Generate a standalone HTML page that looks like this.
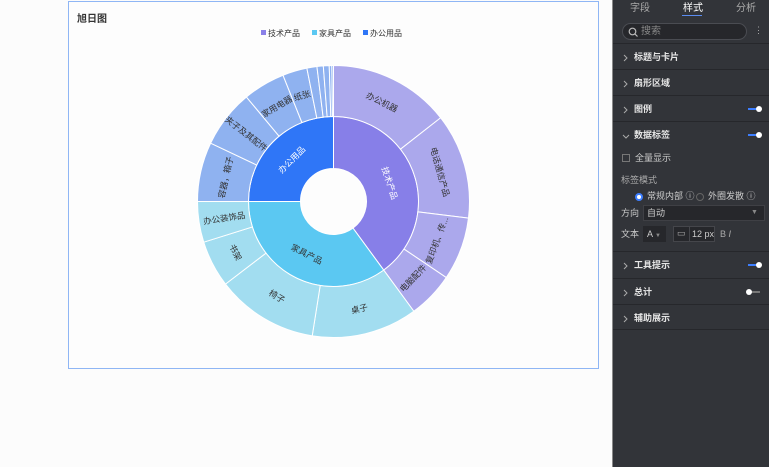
<!DOCTYPE html>
<html><head><meta charset="utf-8"><style>
*{margin:0;padding:0;box-sizing:border-box}
body{width:769px;height:467px;overflow:hidden;background:#fcfcfc;font-family:"Liberation Sans","Noto Sans CJK SC",sans-serif;position:relative}
.card{position:absolute;left:68px;top:1px;width:531px;height:368px;border:1px solid #8fb6f5;background:#fdfdfd}
.title{position:absolute;left:8px;top:8px;font-size:10px;font-weight:bold;color:#333}
.legend{position:absolute;top:26px;left:192px;font-size:8px;color:#333;display:flex;gap:12px}
.legend span i{display:inline-block;width:5px;height:5px;margin-right:2px;vertical-align:1px}
.panel{position:absolute;left:612px;top:0;width:157px;height:467px;background:#323439;border-left:1px solid #8a8a8a;color:#ddd;font-size:9px}
.tab{position:absolute;top:-1px;font-size:10px;color:#aaa}
.row{position:absolute;left:0;width:156px;height:26px;border-top:1px solid #26272b;font-weight:bold;color:#e6e6e6}
.row .t{position:absolute;left:21px;top:7px;line-height:12px}
.row svg.c{position:absolute;left:10px;top:10px}
.tg{position:absolute;left:135px;top:12px;width:12px;height:2px;background:#3d7eff}
.tg:after{content:"";position:absolute;right:-2px;top:-2px;width:6px;height:6px;border-radius:3px;background:#fff}
.tgoff{background:#777}
.tgoff:after{left:-2px;right:auto}
.lbl{position:absolute;color:#ccc;font-size:9px;line-height:11px}
</style></head><body>
<div class="card">
<div class="title">旭日图</div>
<div class="legend"><span><i style="background:#8a80e8"></i>技术产品</span><span><i style="background:#5bc8f2"></i>家具产品</span><span><i style="background:#2f76f7"></i>办公用品</span></div>
</div>
<svg id="ch" width="769" height="467" style="position:absolute;left:0;top:0"></svg>
<div class="panel">
<div class="tab" style="left:17px">字段</div>
<div class="tab" style="left:70px;color:#fff">样式</div>
<div style="position:absolute;left:69px;top:15px;width:20px;height:1px;background:#5b8cf0"></div>
<div class="tab" style="left:123px">分析</div>
<div style="position:absolute;left:9px;top:23px;width:125px;height:17px;border:1px solid #4a4c52;border-radius:9px;background:#26272b"></div>
<svg style="position:absolute;left:15px;top:27px" width="10" height="10"><circle cx="4.5" cy="4.5" r="3.3" fill="none" stroke="#bbb" stroke-width="1.2"/><line x1="7" y1="7" x2="9.5" y2="9.5" stroke="#bbb" stroke-width="1.2"/></svg>
<div class="lbl" style="left:28px;top:26px;font-size:10px;color:#888">搜索</div>
<div class="lbl" style="left:141px;top:25px;color:#aaa">⋮</div>
<div class="row" style="top:43px"><svg class="c" width="5" height="8"><path d="M1 1L4 4L1 7" fill="none" stroke="#aaa"/></svg><span class="t">标题与卡片</span></div>
<div class="row" style="top:69px"><svg class="c" width="5" height="8"><path d="M1 1L4 4L1 7" fill="none" stroke="#aaa"/></svg><span class="t">扇形区域</span></div>
<div class="row" style="top:95px"><svg class="c" width="5" height="8"><path d="M1 1L4 4L1 7" fill="none" stroke="#aaa"/></svg><span class="t">图例</span><div class="tg"></div></div>
<div class="row" style="top:121px;height:130px"><svg class="c" width="8" height="5" style="left:9px;top:12px"><path d="M1 1L4 4L7 1" fill="none" stroke="#aaa"/></svg><span class="t">数据标签</span><div class="tg"></div></div>
<div style="position:absolute;left:9px;top:154px;width:8px;height:8px;border:1px solid #777"></div>
<div class="lbl" style="left:22px;top:153px">全量显示</div>
<div class="lbl" style="left:8px;top:175px;color:#aaa">标签模式</div>
<div style="position:absolute;left:22px;top:193px;width:8px;height:8px;border-radius:4px;border:2px solid #3d7eff;background:#fff"></div>
<div class="lbl" style="left:34px;top:191px">常规内部 ⓘ</div>
<div style="position:absolute;left:83px;top:193px;width:8px;height:8px;border-radius:4px;border:1px solid #666"></div>
<div class="lbl" style="left:95px;top:191px">外圈发散 ⓘ</div>
<div class="lbl" style="left:8px;top:208px">方向</div>
<div style="position:absolute;left:30px;top:205px;width:122px;height:16px;background:#26272b;border:1px solid #3f4045"></div>
<div class="lbl" style="left:34px;top:208px">自动</div>
<div class="lbl" style="left:138px;top:207px;color:#888;font-size:7px">▼</div>
<div class="lbl" style="left:8px;top:229px">文本</div>
<div style="position:absolute;left:30px;top:226px;width:23px;height:16px;background:#26272b"></div>
<div class="lbl" style="left:34px;top:229px">A <span style="font-size:6px;color:#888">▼</span></div>
<div style="position:absolute;left:60px;top:226px;width:42px;height:16px;border:1px solid #45464b;background:#26272b"></div>
<div style="position:absolute;left:76px;top:226px;width:1px;height:16px;background:#45464b"></div>
<div class="lbl" style="left:64px;top:228px;color:#aaa">▭</div>
<div class="lbl" style="left:79px;top:229px">12 px</div>
<div class="lbl" style="left:107px;top:229px;color:#aaa">B <i>I</i></div>
<div class="row" style="top:251px"><svg class="c" width="5" height="8"><path d="M1 1L4 4L1 7" fill="none" stroke="#aaa"/></svg><span class="t">工具提示</span><div class="tg"></div></div>
<div class="row" style="top:278px"><svg class="c" width="5" height="8"><path d="M1 1L4 4L1 7" fill="none" stroke="#aaa"/></svg><span class="t">总计</span><div class="tg tgoff"></div></div>
<div class="row" style="top:304px"><svg class="c" width="5" height="8"><path d="M1 1L4 4L1 7" fill="none" stroke="#aaa"/></svg><span class="t">辅助展示</span></div>
<div class="row" style="top:329px"></div>
</div>
<script>
var cx=333.5,cy=201.5,r0=33,r1=85,r2=136;
var svg=document.getElementById('ch'),h='';
function pt(r,a){a=a*Math.PI/180;return [cx+r*Math.sin(a),cy-r*Math.cos(a)];}
function arc(ri,ro,a0,a1,fill){var l=(a1-a0)>180?1:0;var p1=pt(ro,a0),p2=pt(ro,a1),p3=pt(ri,a1),p4=pt(ri,a0);
return '<path d="M'+p1+' A'+ro+','+ro+' 0 '+l+' 1 '+p2+' L'+p3+' A'+ri+','+ri+' 0 '+l+' 0 '+p4+'Z" fill="'+fill+'" stroke="#fff" stroke-width="1"/>';}
function lab(r,a0,a1,t,c,radial){var m=(a0+a1)/2,p=pt(r,m),rot=radial?m-90:m;rot=((rot%360)+360)%360;if(rot>90&&rot<270)rot=rot-180;
return '<text x="'+p[0]+'" y="'+p[1]+'" transform="rotate('+rot+' '+p[0]+' '+p[1]+')" text-anchor="middle" dominant-baseline="central" font-size="8.5" fill="'+c+'" font-family="Liberation Sans,Noto Sans CJK SC,sans-serif">'+t+'</text>';}
var inner=[[0,143.8,'#877fe8','技术产品','#fff'],[143.8,270,'#5bc8f2','家具产品','#333'],[270,360,'#2f76f7','办公用品','#fff']];
var outer=[[0,52,'#aba8ec','办公机器'],[52,97,'#aba8ec','电话通信产品'],[97,124,'#aba8ec','复印机、传...'],[124,143.8,'#aba8ec','电脑配件'],
[143.8,189,'#a2ddf0','桌子'],[189,232.6,'#a2ddf0','椅子'],[232.6,252.6,'#a2ddf0','书架'],[252.6,270,'#a2ddf0','办公装饰品',1],
[270,295.4,'#8fb2f0','容器，箱子'],[295.4,320.2,'#8fb2f0','夹子及其配件',1],[320.2,338.2,'#8fb2f0','家用电器'],[338.2,348.7,'#8fb2f0','纸张'],
[348.7,353,'#8fb2f0',''],[353,355.7,'#8fb2f0',''],[355.7,358.2,'#8fb2f0',''],[358.2,359.3,'#8fb2f0',''],[359.3,360,'#8fb2f0','']];
inner.forEach(function(s){h+=arc(r0,r1,s[0],s[1],s[2]);});
outer.forEach(function(s){h+=arc(r1,r2,s[0],s[1],s[2]);});
inner.forEach(function(s){h+=lab((r0+r1)/2,s[0],s[1],s[3],s[4]);});
outer.forEach(function(s){if(s[3])h+=lab((r1+r2)/2,s[0],s[1],s[3],'#333',s[4]);});
svg.innerHTML=h;
</script>
</body></html>
